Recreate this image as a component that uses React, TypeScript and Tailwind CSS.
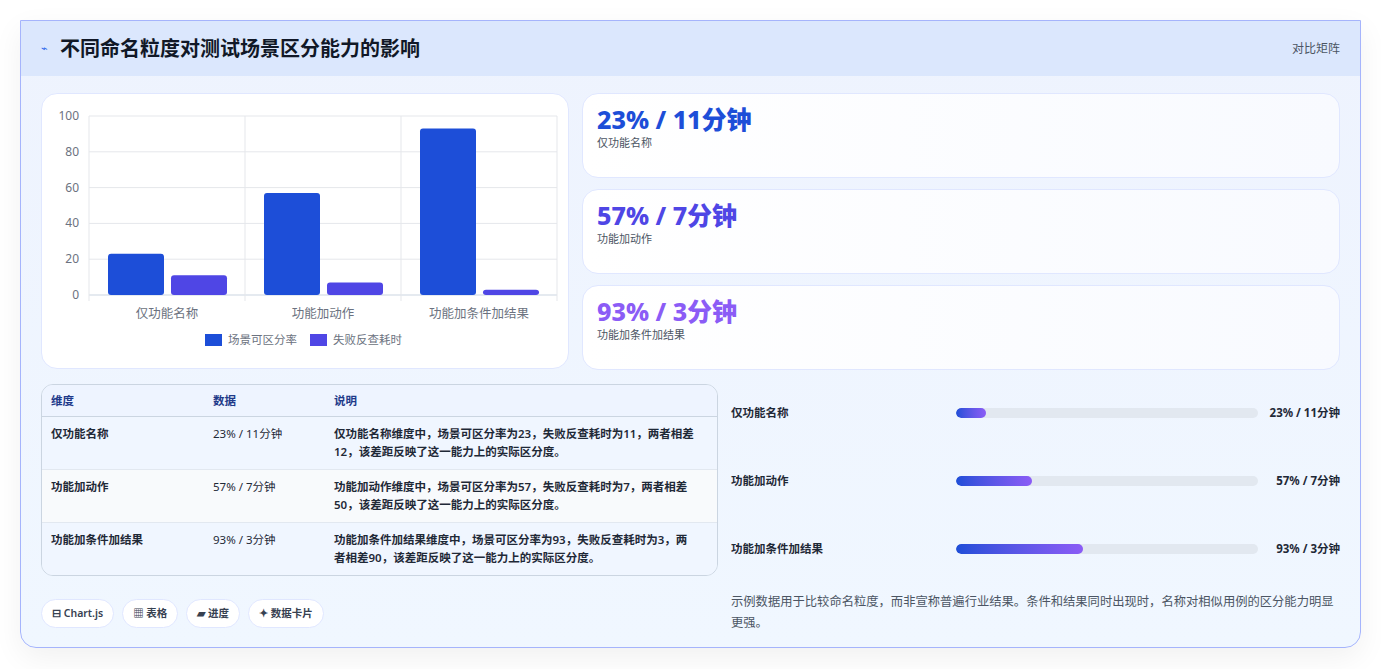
const rows = [
  { name: '仅功能名称', a: 23, b: 11, val: '23% / 11分钟', desc: '仅功能名称维度中，场景可区分率为23，失败反查耗时为11，两者相差12，该差距反映了这一能力上的实际区分度。', fill: '10%' },
  { name: '功能加动作', a: 57, b: 7, val: '57% / 7分钟', desc: '功能加动作维度中，场景可区分率为57，失败反查耗时为7，两者相差50，该差距反映了这一能力上的实际区分度。', fill: '25%' },
  { name: '功能加条件加结果', a: 93, b: 3, val: '93% / 3分钟', desc: '功能加条件加结果维度中，场景可区分率为93，失败反查耗时为3，两者相差90，该差距反映了这一能力上的实际区分度。', fill: '42%' },
];

const statColors = ['text-[#1d4ed8]', 'text-[#4f46e5]', 'text-[#8b5cf6]'];

function Chart() {
  const left = 47, top = 22, h = 179, cw = 156;
  return (
    <svg width="527" height="275" className="block">
      {[0, 20, 40, 60, 80, 100].map(t => {
        const y = top + h - (t / 100) * h;
        return (
          <g key={t}>
            <line x1={left} x2={left + 468} y1={y} y2={y} stroke={t === 0 ? '#cbd5e1' : '#e5e7eb'} />
            <text x={left - 10} y={y + 4} textAnchor="end" fontSize="12" fill="#6b7280">{t}</text>
          </g>
        );
      })}
      {[0, 1, 2, 3].map(i => (
        <line key={i} x1={left + i * cw} x2={left + i * cw} y1={top} y2={top + h + 6} stroke="#e5e7eb" />
      ))}
      {rows.map((r, i) => {
        const x = left + i * cw + 19;
        return (
          <g key={r.name}>
            <rect x={x} y={top + h - (r.a / 100) * h} width="56" height={(r.a / 100) * h} rx="3" fill="#1d4ed8" />
            <rect x={x + 63} y={top + h - (r.b / 100) * h} width="56" height={(r.b / 100) * h} rx="3" fill="#4f46e5" />
            <text x={left + i * cw + cw / 2} y={top + h + 23} textAnchor="middle" fontSize="12.5" fill="#6b7280">{r.name}</text>
          </g>
        );
      })}
      <rect x="163" y="240" width="17" height="12" fill="#1d4ed8" />
      <text x="186" y="250" fontSize="11.5" fill="#6b7280">场景可区分率</text>
      <rect x="268" y="240" width="17" height="12" fill="#4f46e5" />
      <text x="291" y="250" fontSize="11.5" fill="#6b7280">失败反查耗时</text>
    </svg>
  );
}

export default function App() {
  return (
    <div className="min-h-screen bg-white p-5" style={{ fontFamily: '"Noto Sans", "Noto Sans CJK SC", sans-serif' }}>
      <div className="rounded-b-2xl border border-[#a5b4fc] overflow-hidden bg-gradient-to-b from-[#eef3fe] to-[#f0f7ff] shadow-[0_10px_30px_rgba(0,0,0,0.06)]">
        <div className="h-[55px] bg-[#dbe7fd] flex items-center justify-between px-5">
          <div className="flex items-center gap-3">
            <span className="text-[#2563eb] text-[11px]">⌁</span>
            <h1 className="text-[20px] font-bold text-[#111827]">不同命名粒度对测试场景区分能力的影响</h1>
          </div>
          <span className="text-[12px] text-[#4b5563]">对比矩阵</span>
        </div>
        <div className="px-5 pt-[17px] pb-[14px]">
          <div className="flex gap-[13px]">
            <div className="w-[528px] h-[276px] rounded-2xl bg-white border border-[#e0e7ff]">
              <Chart />
            </div>
            <div className="flex-1 flex flex-col gap-[11px]">
              {rows.map((r, i) => (
                <div key={r.name} className="h-[85px] rounded-2xl bg-gradient-to-r from-white to-[#f8faff] border border-[#e0e7ff] px-[14px] pt-[9px]">
                  <div className={`text-[25px] font-extrabold leading-[32px] ${statColors[i]}`}>{r.val}</div>
                  <div className="text-[11px] text-[#4b5563]">{r.name}</div>
                </div>
              ))}
            </div>
          </div>
          <div className="flex gap-[13px] mt-[14px]">
            <div className="w-[677px] shrink-0">
              <div className="rounded-xl border border-[#cbd5e1] overflow-hidden text-[11.5px]">
                <div className="grid grid-cols-[162px_121px_1fr] bg-[#eef4ff] border-b border-[#cbd5e1] h-[32px] items-center px-[9px] font-semibold text-[#1e3a8a]">
                  <div>维度</div><div>数据</div><div>说明</div>
                </div>
                {rows.map((r, i) => (
                  <div key={r.name} className={`grid grid-cols-[162px_121px_1fr] px-[9px] py-[8px] leading-[18px] text-[#1f2937] ${i === 1 ? 'bg-[#f8fafc]' : 'bg-[#f0f6ff]'} ${i < 2 ? 'border-b border-[#e2e8f0]' : ''}`}>
                    <div className="font-semibold">{r.name}</div>
                    <div>{r.val}</div>
                    <div className="font-semibold pr-3">{r.desc}</div>
                  </div>
                ))}
              </div>
              <div className="flex gap-[8px] mt-[23px]">
                {['⊟ Chart.js', '▦ 表格', '▰ 进度', '✦ 数据卡片'].map(c => (
                  <span key={c} className="h-[29px] px-[10px] rounded-full bg-white border border-[#e0e7ff] text-[10.5px] font-semibold text-[#374151] flex items-center">{c}</span>
                ))}
              </div>
            </div>
            <div className="flex-1 flex flex-col">
              <div className="flex flex-col gap-[49px] pt-[19px]">
                {rows.map(r => (
                  <div key={r.name} className="flex items-center h-[19px]">
                    <div className="w-[225px] text-[11.5px] font-semibold text-[#1f2937]">{r.name}</div>
                    <div className="flex-1 h-[10px] rounded-full bg-[#e2e8f0] overflow-hidden">
                      <div className="h-full rounded-full bg-gradient-to-r from-[#1d4ed8] to-[#8b5cf6]" style={{ width: r.fill }} />
                    </div>
                    <div className="w-[82px] text-right text-[11.5px] font-bold text-[#1f2937]">{r.val}</div>
                  </div>
                ))}
              </div>
              <p className="mt-[33px] text-[12.3px] leading-[21px] text-[#4b5563]">示例数据用于比较命名粒度，而非宣称普遍行业结果。条件和结果同时出现时，名称对相似用例的区分能力明显更强。</p>
            </div>
          </div>
        </div>
      </div>
    </div>
  );
}
